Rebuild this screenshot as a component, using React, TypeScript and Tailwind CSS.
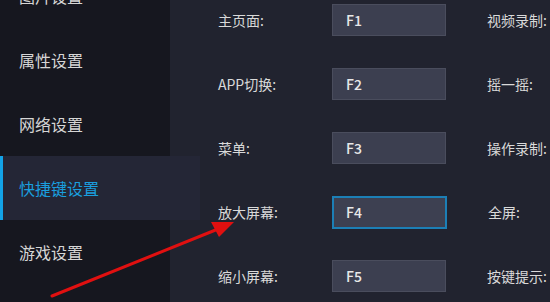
import React from 'react';

const menu = [
  { label: '图片设置' },
  { label: '属性设置' },
  { label: '网络设置' },
  { label: '快捷键设置', active: true },
  { label: '游戏设置' },
];

const rows = [
  { left: '主页面:', key: 'F1', right: '视频录制:' },
  { left: 'APP切换:', key: 'F2', right: '摇一摇:' },
  { left: '菜单:', key: 'F3', right: '操作录制:' },
  { left: '放大屏幕:', key: 'F4', right: '全屏:', focus: true },
  { left: '缩小屏幕:', key: 'F5', right: '按键提示:' },
];

export default function App() {
  return (
    <div
      className="relative flex h-[302px] w-[550px] overflow-hidden bg-[#21232f]"
      style={{ fontFamily: '"Noto Sans CJK SC", "Noto Sans", sans-serif' }}
    >
      {/* Sidebar */}
      <div className="flex w-[170px] shrink-0 flex-col bg-[#16171f]">
        <div className="mt-[-36px] flex flex-col">
          {menu.map((m) => (
            <div
              key={m.label}
              className={
                m.active
                  ? 'flex h-[64px] w-[200px] items-center border-l-[3px] border-[#13a3e8] bg-[#242636] pl-[16px] text-[16px] text-[#1a9ede]'
                  : 'flex h-[64px] items-center pl-[19px] text-[16px] text-[#d6d6d6]'
              }
            >
              {m.label}
            </div>
          ))}
        </div>
      </div>

      {/* Shortcut rows */}
      <div className="flex flex-1 flex-col gap-[32px] pl-[48px] pt-[4px]">
        {rows.map((r) => (
          <div key={r.key} className="flex h-[32px] items-center text-[14px] text-[#d9d9d9]">
            <div className="w-[114px]">{r.left}</div>
            <div
              className={
                r.focus
                  ? 'flex h-[33px] w-[115px] items-center border-2 border-[#1c7fb6] bg-[#3d4051] pl-[12px] font-medium text-[#e8e8e8]'
                  : 'flex h-[32px] w-[114px] items-center border border-[#4a4d5d] bg-[#3c3f50] pl-[13px] font-medium text-[#e8e8e8]'
              }
            >
              {r.key}
            </div>
            <div className="ml-[41px] whitespace-nowrap">{r.right}</div>
          </div>
        ))}
      </div>

      {/* Red annotation arrow */}
      <svg className="absolute left-0 top-0" width="550" height="302" viewBox="0 0 550 302">
        <line x1="52" y1="296" x2="218" y2="229" stroke="#e01010" strokeWidth="3" strokeLinecap="round" />
        <polygon points="234,222 211,222 219,237" fill="#e01010" />
      </svg>
    </div>
  );
}
